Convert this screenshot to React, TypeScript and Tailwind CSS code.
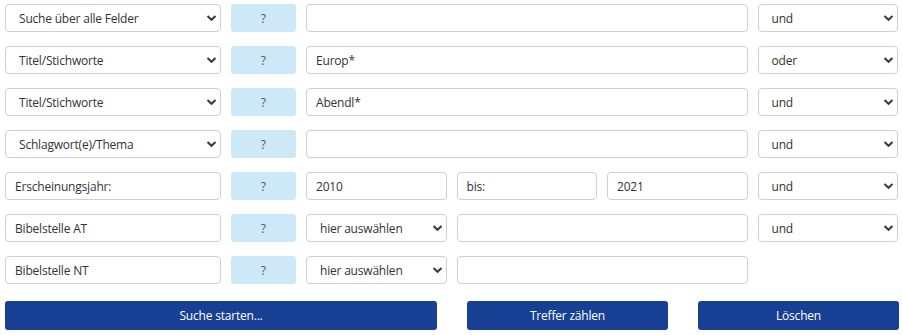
import React from "react";

const font = { fontFamily: '"Open Sans", "Noto Sans", sans-serif' };

function Chevron() {
  return (
    <svg className="pointer-events-none absolute right-[3px] top-1/2 -translate-y-1/2" width="11" height="7" viewBox="0 0 11 7">
      <polyline points="1.5,1.5 5.5,5.3 9.5,1.5" fill="none" stroke="#3a3a3a" strokeWidth="2" />
    </svg>
  );
}

function Select({ value }: { value: string }) {
  return (
    <div className="relative flex h-[28px] items-center rounded-[4px] border border-[#cfcfcf] bg-white pl-[13px] pt-[1px] text-[12px] tracking-[-0.2px] text-[#333]">
      <span>{value}</span>
      <Chevron />
    </div>
  );
}

function Input({ value = "" }: { value?: string }) {
  return (
    <div className="flex h-[28px] items-center rounded-[4px] border border-[#cfcfcf] bg-white pl-[9px] pt-[1px] text-[12px] tracking-[-0.2px] text-[#333]">
      <span>{value}</span>
    </div>
  );
}

function Help() {
  return (
    <div className="flex h-[28px] items-center justify-center rounded-[3px] bg-[#cde8f7] pt-[1px] text-[12px] text-[#555]">?</div>
  );
}

function Cell({ span, children }: { span: string; children?: React.ReactNode }) {
  return <div className={`px-[5px] ${span}`}>{children}</div>;
}

export default function App() {
  return (
    <div className="w-[903px] bg-white pt-[4px]" style={font}>
      <div className="flex flex-col gap-[14px]">
        {[
          ["Suche über alle Felder", "", "und"],
          ["Titel/Stichworte", "Europ*", "oder"],
          ["Titel/Stichworte", "Abendl*", "und"],
          ["Schlagwort(e)/Thema", "", "und"],
        ].map(([a, b, c], i) => (
          <div key={i} className="grid grid-cols-12">
            <Cell span="col-span-3"><Select value={a} /></Cell>
            <Cell span="col-span-1"><Help /></Cell>
            <Cell span="col-span-6"><Input value={b} /></Cell>
            <Cell span="col-span-2"><Select value={c} /></Cell>
          </div>
        ))}
        <div className="grid grid-cols-12">
          <Cell span="col-span-3"><Input value="Erscheinungsjahr:" /></Cell>
          <Cell span="col-span-1"><Help /></Cell>
          <Cell span="col-span-2"><Input value="2010" /></Cell>
          <Cell span="col-span-2"><Input value="bis:" /></Cell>
          <Cell span="col-span-2"><Input value="2021" /></Cell>
          <Cell span="col-span-2"><Select value="und" /></Cell>
        </div>
        <div className="grid grid-cols-12">
          <Cell span="col-span-3"><Input value="Bibelstelle AT" /></Cell>
          <Cell span="col-span-1"><Help /></Cell>
          <Cell span="col-span-2"><Select value="hier auswählen" /></Cell>
          <Cell span="col-span-4"><Input /></Cell>
          <Cell span="col-span-2"><Select value="und" /></Cell>
        </div>
        <div className="grid grid-cols-12">
          <Cell span="col-span-3"><Input value="Bibelstelle NT" /></Cell>
          <Cell span="col-span-1"><Help /></Cell>
          <Cell span="col-span-2"><Select value="hier auswählen" /></Cell>
          <Cell span="col-span-4"><Input /></Cell>
        </div>
      </div>
      <div className="mt-[17px] flex gap-[30px] pl-[5px]">
        <button className="h-[29px] w-[432px] rounded-[3px] bg-[#173f93] text-[12px] tracking-[-0.2px] text-white">Suche starten...</button>
        <button className="h-[29px] w-[201px] rounded-[3px] bg-[#173f93] text-[12px] tracking-[-0.2px] text-white">Treffer zählen</button>
        <button className="h-[29px] w-[201px] rounded-[3px] bg-[#173f93] text-[12px] tracking-[-0.2px] text-white">Löschen</button>
      </div>
    </div>
  );
}
